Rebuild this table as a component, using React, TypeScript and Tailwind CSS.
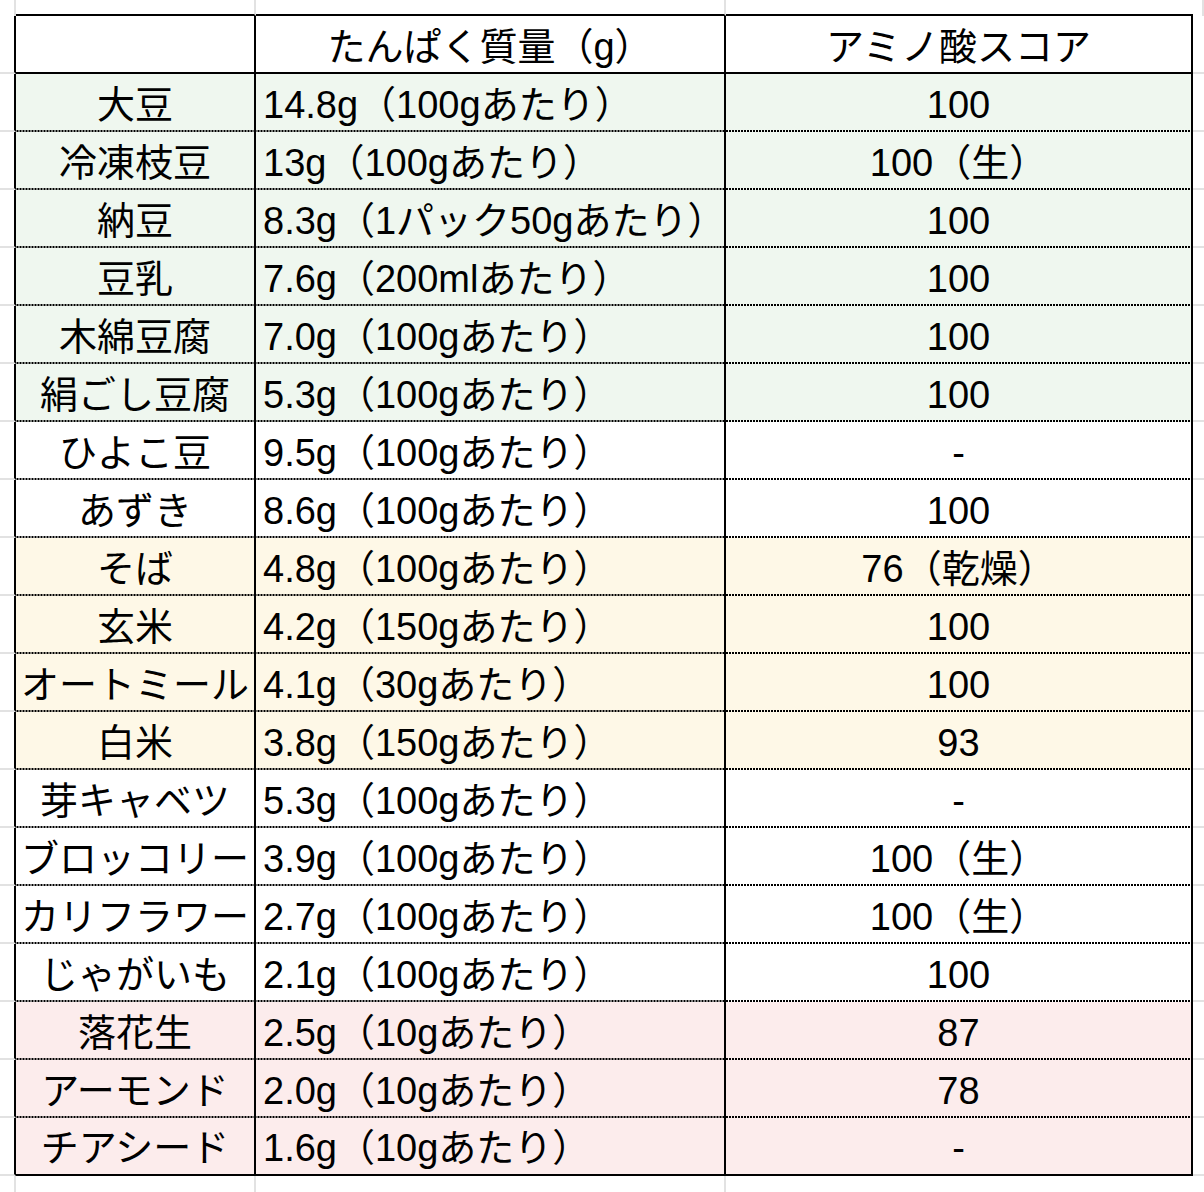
import React from 'react';

type Tone = 'green' | 'white' | 'yellow' | 'pink';

interface Food {
  name: string;
  protein: string;
  score: string;
  tone: Tone;
}

const foods: Food[] = [
  { name: '大豆', protein: '14.8g（100gあたり）', score: '100', tone: 'green' },
  { name: '冷凍枝豆', protein: '13g（100gあたり）', score: '100（生）', tone: 'green' },
  { name: '納豆', protein: '8.3g（1パック50gあたり）', score: '100', tone: 'green' },
  { name: '豆乳', protein: '7.6g（200mlあたり）', score: '100', tone: 'green' },
  { name: '木綿豆腐', protein: '7.0g（100gあたり）', score: '100', tone: 'green' },
  { name: '絹ごし豆腐', protein: '5.3g（100gあたり）', score: '100', tone: 'green' },
  { name: 'ひよこ豆', protein: '9.5g（100gあたり）', score: '-', tone: 'white' },
  { name: 'あずき', protein: '8.6g（100gあたり）', score: '100', tone: 'white' },
  { name: 'そば', protein: '4.8g（100gあたり）', score: '76（乾燥）', tone: 'yellow' },
  { name: '玄米', protein: '4.2g（150gあたり）', score: '100', tone: 'yellow' },
  { name: 'オートミール', protein: '4.1g（30gあたり）', score: '100', tone: 'yellow' },
  { name: '白米', protein: '3.8g（150gあたり）', score: '93', tone: 'yellow' },
  { name: '芽キャベツ', protein: '5.3g（100gあたり）', score: '-', tone: 'white' },
  { name: 'ブロッコリー', protein: '3.9g（100gあたり）', score: '100（生）', tone: 'white' },
  { name: 'カリフラワー', protein: '2.7g（100gあたり）', score: '100（生）', tone: 'white' },
  { name: 'じゃがいも', protein: '2.1g（100gあたり）', score: '100', tone: 'white' },
  { name: '落花生', protein: '2.5g（10gあたり）', score: '87', tone: 'pink' },
  { name: 'アーモンド', protein: '2.0g（10gあたり）', score: '78', tone: 'pink' },
  { name: 'チアシード', protein: '1.6g（10gあたり）', score: '-', tone: 'pink' },
];

const toneBg: Record<Tone, string> = {
  green: 'bg-[#eff7ef]',
  white: 'bg-white',
  yellow: 'bg-[#fef8e7]',
  pink: 'bg-[#fcecec]',
};

// square dots, 2px on / 1px off, like the spreadsheet's dotted rule
const dotted =
  'bg-[linear-gradient(to_right,#000_2px,transparent_2px)] bg-size-[3px_2px] bg-bottom bg-repeat-x';

const gray = 'border-[#e2e2e2]';

export default function App() {
  const last = foods.length - 1;

  return (
    <div
      className="h-[1192px] w-[1204px] bg-white text-[38px] leading-none text-black"
      style={{ fontFamily: '"Liberation Sans", "Noto Sans CJK JP", sans-serif' }}
    >
      <div className="grid grid-cols-[16px_240px_470px_467px_11px] grid-rows-[16px_repeat(20,58px)_16px]">
        {/* top margin row */}
        <div className={`border-r-2 ${gray}`} />
        <div className={`border-b-2 border-r-2 ${gray} border-b-black`} />
        <div className={`border-b-2 border-r-2 ${gray} border-b-black`} />
        <div className="border-b-2 border-black" />
        <div className={`border-r-2 ${gray}`} />

        {/* header */}
        <div className="border-b-2 border-r-2 border-b-[#e2e2e2] border-r-black" />
        <div className="border-b-2 border-r-2 border-black bg-white" />
        <div className="flex items-center justify-center whitespace-nowrap border-b-2 border-r-2 border-black bg-white pt-[6px]">
          たんぱく質量（g）
        </div>
        <div className="flex items-center justify-center whitespace-nowrap border-b-2 border-r-2 border-black bg-white pt-[6px]">
          アミノ酸スコア
        </div>
        <div className={`border-b-2 ${gray}`} />

        {foods.map((f, i) => {
          const rule = i === last ? 'border-b-2' : dotted;
          const cell = `border-r-2 border-black pt-1 whitespace-nowrap ${rule} ${toneBg[f.tone]}`;
          return (
            <React.Fragment key={f.name}>
              <div className="border-b-2 border-r-2 border-b-[#e2e2e2] border-r-black" />
              <div className={`flex items-center justify-center ${cell}`}>{f.name}</div>
              <div className={`flex items-center pl-[7px] ${cell}`}>{f.protein}</div>
              <div className={`flex items-center justify-center ${cell}`}>{f.score}</div>
              <div className={`border-b-2 ${gray}`} />
            </React.Fragment>
          );
        })}

        {/* bottom margin row */}
        <div className={`border-r-2 ${gray}`} />
        <div className={`border-r-2 ${gray}`} />
        <div className={`border-r-2 ${gray}`} />
        <div />
        <div />
      </div>
    </div>
  );
}
